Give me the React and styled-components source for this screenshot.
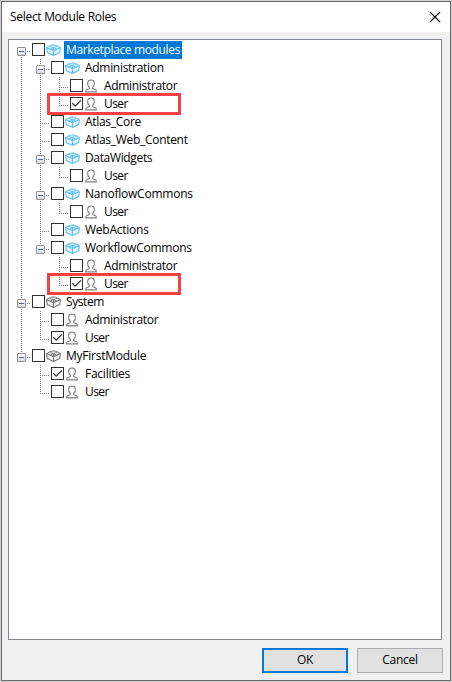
import React from "react";
import styled, { createGlobalStyle, css } from "styled-components";

const GlobalStyle = createGlobalStyle`
  * { box-sizing: border-box; }
  body { margin: 0; background: #cfcfcf; }
`;

const Dialog = styled.div`
  width: 450px;
  height: 680px;
  margin: 1px 0 0 1px;
  display: flex;
  flex-direction: column;
  background: #f0f0f0;
  border: 1px solid #6b6b6b;
  font: 12px/18px "Open Sans", "Noto Sans", sans-serif;
  color: #000;
`;

const TitleBar = styled.header`
  height: 30px;
  padding: 0 9px 0 8px;
  display: flex;
  align-items: center;
  justify-content: space-between;
  background: #fff;
`;

const Title = styled.h1`
  margin: 0;
  font: inherit;
  letter-spacing: ${(p) => p.$spacing}px;
`;

const CloseButton = styled.button`
  display: flex;
  margin-top: -1px;
  padding: 0;
  border: 0;
  background: none;
`;

const Tree = styled.div`
  width: 434px;
  height: 601px;
  margin: 7px 0 0 6px;
  padding: 1px 0 0 3px;
  background: #fff;
  border: 1px solid #828790;
`;

const TreeRow = styled.div`
  position: relative;
  display: flex;
  height: 18px;
`;

const dotsDown = "repeating-linear-gradient(to bottom, #808080 0 1px, transparent 1px 2px)";
const dotsRight = "repeating-linear-gradient(to right, #808080 0 1px, transparent 1px 2px)";
const guides = {
  none: css``,
  line: css`background: ${dotsDown} 9px 0 / 1px 18px no-repeat;`,
  tee: css`background: ${dotsDown} 9px 0 / 1px 18px no-repeat, ${dotsRight} 9px 10px / 10px 1px no-repeat;`,
  end: css`background: ${dotsDown} 9px 0 / 1px 11px no-repeat, ${dotsRight} 9px 10px / 10px 1px no-repeat;`,
  first: css`background: ${dotsDown} 9px 10px / 1px 8px no-repeat, ${dotsRight} 9px 10px / 10px 1px no-repeat;`,
};

const Guide = styled.span`
  width: 19px;
  height: 18px;
  padding: 6px 0 0 5px;
  ${(p) => guides[p.$kind]}
`;

const Expander = styled.span`
  display: flex;
  align-items: center;
  justify-content: center;
  width: 9px;
  height: 9px;
  border: 1px solid #919191;
  border-radius: 1px;
  background: linear-gradient(#fff, #dcdcdc);
  &::before {
    content: "";
    width: 5px;
    height: 1px;
    background: #4b63a7;
  }
`;

const CheckBox = styled.span`
  display: flex;
  width: 13px;
  height: 13px;
  margin: 2px 1px 0 1px;
  border: 1px solid #333;
  background: #fff;
`;

const IconSlot = styled.span`
  display: flex;
  width: 15px;
  margin: 2px 3px 0 0;
`;

const Label = styled.span`
  padding: 0 2px;
  height: 18px;
  line-height: 17px;
  white-space: nowrap;
  letter-spacing: ${(p) => p.$spacing}px;
  ${(p) => p.$selected && css`background: #0078d7; color: #fff;`}
`;

const Highlight = styled.div`
  position: absolute;
  left: 35px;
  top: -2px;
  width: 134px;
  height: 22px;
  border: 3px solid #f94144;
`;

const Footer = styled.footer`
  display: flex;
  justify-content: flex-end;
  gap: 9px;
  padding: 8px 7px 0 0;
`;

const Button = styled.button`
  width: 86px;
  height: 25px;
  padding: 0 0 1px;
  font: inherit;
  letter-spacing: ${(p) => p.$spacing}px;
  color: #000;
  background: #e1e1e1;
  border: ${(p) => (p.$primary ? "2px solid #0078d7" : "1px solid #adadad")};
`;

const ModuleIcon = ({ color, fill }) => (
  <svg width="15" height="14" viewBox="0 0 15 14" fill="none" stroke={color} strokeWidth="1.1">
    <path d="M.7 4.700Q4 2 7.500 1.700 11 2 14.300 4.700L13.800 9.500 7.500 12.400 1.200 9.500Z" fill={fill} strokeLinejoin="round" />
    <path d="M.7 4.700 7.500 7.600 14.300 4.700M7.500 4V12.400" />
    <path d="M3.900 3.500 7.500 4.600 11.100 3.500M4.300 6 7.500 4.600 10.700 6" strokeWidth=".9" />
  </svg>
);

const RoleIcon = () => (
  <svg width="15" height="14" viewBox="0 0 15 14" fill="none" stroke="#808080" strokeWidth="1.1">
    <path d="M5.400 8.500C2.900 6.500 2.600 1 7 1S11.100 6.500 8.600 8.500L8.800 9.700 11.800 10.900Q12.500 11.400 12.300 12.900H1.700Q1.500 11.400 2.200 10.900L5.200 9.700Z" />
  </svg>
);

const Check = () => (
  <svg width="11" height="11" viewBox="0 0 11 11" fill="none" stroke="#333" strokeWidth="1.3">
    <path d="M1.300 5.200 4.200 8.100 9.900 2.400" />
  </svg>
);

const BLUE = ["#5bc0f5", "#e3f5fe"];
const GRAY = ["#777", "#f4f4f4"];

const rows = [
  { label: "Marketplace modules", guides: ["first"], open: true, icon: BLUE, selected: true, spacing: -0.36 },
  { label: "Administration", guides: ["line", "tee"], open: true, icon: BLUE, spacing: -0.3 },
  { label: "Administrator", guides: ["line", "line", "tee"], spacing: -0.32 },
  { label: "User", guides: ["line", "line", "end"], checked: true, marked: true, spacing: -0.6 },
  { label: "Atlas_Core", guides: ["line", "tee"], icon: BLUE, spacing: -0.3 },
  { label: "Atlas_Web_Content", guides: ["line", "tee"], icon: BLUE, spacing: -0.3 },
  { label: "DataWidgets", guides: ["line", "tee"], open: true, icon: BLUE, spacing: -0.35 },
  { label: "User", guides: ["line", "line", "end"], spacing: -0.6 },
  { label: "NanoflowCommons", guides: ["line", "tee"], open: true, icon: BLUE, spacing: -0.22 },
  { label: "User", guides: ["line", "line", "end"], spacing: -0.6 },
  { label: "WebActions", guides: ["line", "tee"], icon: BLUE, spacing: -0.25 },
  { label: "WorkflowCommons", guides: ["line", "end"], open: true, icon: BLUE, spacing: -0.24 },
  { label: "Administrator", guides: ["line", "none", "tee"], spacing: -0.32 },
  { label: "User", guides: ["line", "none", "end"], checked: true, marked: true, spacing: -0.6 },
  { label: "System", guides: ["tee"], open: true, icon: GRAY, spacing: -0.4 },
  { label: "Administrator", guides: ["line", "tee"], spacing: -0.32 },
  { label: "User", guides: ["line", "end"], checked: true, spacing: -0.6 },
  { label: "MyFirstModule", guides: ["end"], open: true, icon: GRAY, spacing: -0.25 },
  { label: "Facilities", guides: ["none", "tee"], checked: true, spacing: -0.25 },
  { label: "User", guides: ["none", "end"], spacing: -0.6 },
];

export default function App() {
  return (
    <>
      <GlobalStyle />
      <Dialog>
        <TitleBar>
          <Title $spacing={-0.3}>Select Module Roles</Title>
          <CloseButton aria-label="Close">
            <svg width="12" height="12" viewBox="0 0 12 12" stroke="#000" strokeWidth="1.1">
              <path d="M1 1 11 11M11 1 1 11" />
            </svg>
          </CloseButton>
        </TitleBar>
        <Tree>
          {rows.map((row, i) => (
            <TreeRow key={i}>
              {row.guides.map((kind, level) => (
                <Guide key={level} $kind={kind}>
                  {row.open && level === row.guides.length - 1 && <Expander />}
                </Guide>
              ))}
              <CheckBox>{row.checked && <Check />}</CheckBox>
              <IconSlot>
                {row.icon ? <ModuleIcon color={row.icon[0]} fill={row.icon[1]} /> : <RoleIcon />}
              </IconSlot>
              <Label $selected={row.selected} $spacing={row.spacing || 0}>{row.label}</Label>
              {row.marked && <Highlight />}
            </TreeRow>
          ))}
        </Tree>
        <Footer>
          <Button $primary $spacing={-0.4}>OK</Button>
          <Button $spacing={-0.3}>Cancel</Button>
        </Footer>
      </Dialog>
    </>
  );
}
